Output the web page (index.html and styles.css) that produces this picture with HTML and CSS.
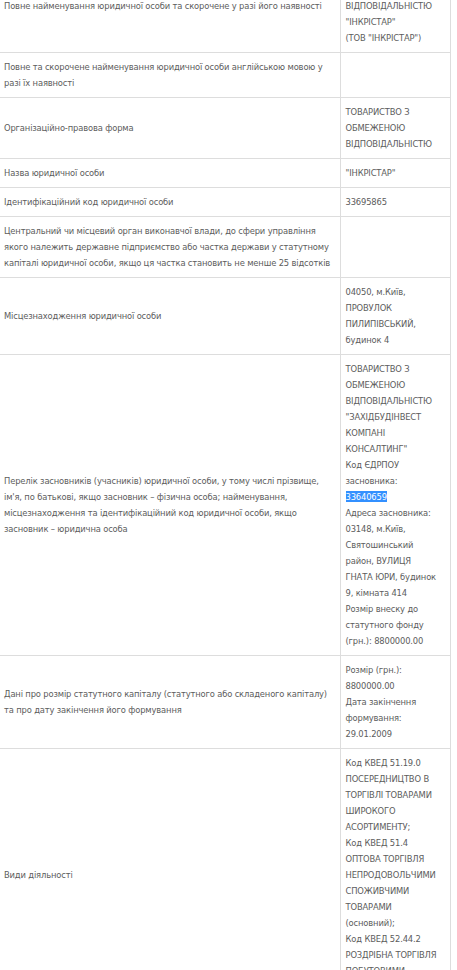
FILE: index.html
```html
<!DOCTYPE html>
<html lang="uk">
<head>
    <meta charset="UTF-8">
    <meta name="viewport" content="width=device-width, initial-scale=1.0">
    <title>Відомості про юридичну особу</title>
    <link rel="stylesheet" href="styles.css">
</head>
<body>

<table class="record">
    <colgroup>
        <col class="col-label">
        <col class="col-value">
    </colgroup>
    <tr>
        <td>Повне найменування юридичної особи та скорочене у разі його наявності</td>
        <td>ТОВАРИСТВО З<br>ОБМЕЖЕНОЮ<br>ВІДПОВІДАЛЬНІСТЮ<br>"ІНКРІСТАР"<br>(ТОВ "ІНКРІСТАР")</td>
    </tr>
    <tr>
        <td>Повне та скорочене найменування юридичної особи англійською мовою у<br>разі їх наявності</td>
        <td></td>
    </tr>
    <tr>
        <td>Організаційно-правова форма</td>
        <td>ТОВАРИСТВО З<br>ОБМЕЖЕНОЮ<br>ВІДПОВІДАЛЬНІСТЮ</td>
    </tr>
    <tr>
        <td>Назва юридичної особи</td>
        <td>"ІНКРІСТАР"</td>
    </tr>
    <tr>
        <td>Ідентифікаційний код юридичної особи</td>
        <td>33695865</td>
    </tr>
    <tr>
        <td>Центральний чи місцевий орган виконавчої влади, до сфери управління<br>якого належить державне підприємство або частка держави у статутному<br>капіталі юридичної особи, якщо ця частка становить не менше 25 відсотків</td>
        <td></td>
    </tr>
    <tr>
        <td>Місцезнаходження юридичної особи</td>
        <td>04050, м.Київ,<br>ПРОВУЛОК<br>ПИЛИПІВСЬКИЙ,<br>будинок 4</td>
    </tr>
    <tr>
        <td>Перелік засновників (учасників) юридичної особи, у тому числі прізвище,<br>ім'я, по батькові, якщо засновник – фізична особа; найменування,<br>місцезнаходження та ідентифікаційний код юридичної особи, якщо<br>засновник – юридична особа</td>
        <td>ТОВАРИСТВО З<br>ОБМЕЖЕНОЮ<br>ВІДПОВІДАЛЬНІСТЮ<br>"ЗАХІДБУДІНВЕСТ<br>КОМПАНІ<br>КОНСАЛТИНГ"<br>Код ЄДРПОУ<br>засновника:<br><span class="picked">33640659</span><br>Адреса засновника:<br>03148, м.Київ,<br>Святошинський<br>район, ВУЛИЦЯ<br>ГНАТА ЮРИ, будинок<br>9, кімната 414<br>Розмір внеску до<br>статутного фонду<br>(грн.): 8800000.00</td>
    </tr>
    <tr>
        <td>Дані про розмір статутного капіталу (статутного або складеного капіталу)<br>та про дату закінчення його формування</td>
        <td>Розмір (грн.):<br>8800000.00<br>Дата закінчення<br>формування:<br>29.01.2009</td>
    </tr>
    <tr>
        <td>Види діяльності</td>
        <td>Код КВЕД 51.19.0<br>ПОСЕРЕДНИЦТВО В<br>ТОРГІВЛІ ТОВАРАМИ<br>ШИРОКОГО<br>АСОРТИМЕНТУ;<br>Код КВЕД 51.4<br>ОПТОВА ТОРГІВЛЯ<br>НЕПРОДОВОЛЬЧИМИ<br>СПОЖИВЧИМИ<br>ТОВАРАМИ<br>(основний);<br>Код КВЕД 52.44.2<br>РОЗДРІБНА ТОРГІВЛЯ<br>ПОБУТОВИМИ<br>ТОВАРАМИ</td>
    </tr>
</table>

</body>
</html>
```
FILE: styles.css
```css
body {
    margin: 0;
    background-color: #fff;
    color: #5c5c5c;
    font-family: "DejaVu Sans Condensed", Roboto, sans-serif;
    font-size: 9.3px;
    letter-spacing: -0.15px;
    line-height: 16px;
}
.record {
    /* the shot starts part way down the first row */
    margin-top: -41px;
    width: 451px;
    table-layout: fixed;
    border-collapse: collapse;
}
.col-label {
    width: 340px;
}
.record td {
    border: 1px solid #ddd;
    padding: 6px 4px;
    vertical-align: middle;
    white-space: nowrap;
}
.record td:first-child {
    border-left: none;
}
.record td:last-child {
    padding: 6px 2px 6px 5px;
}
.picked {
    background-color: #3390ff;
    color: #fff;
}
```
